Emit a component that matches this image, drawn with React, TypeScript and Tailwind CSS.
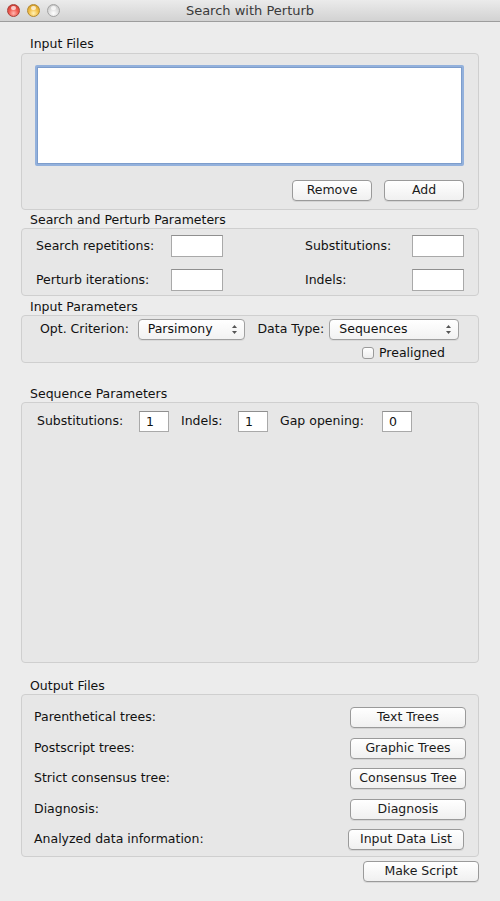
import React from 'react';

const font = "font-['Lucida_Grande','DejaVu_Sans',sans-serif]";

const Btn = ({ label, className = '' }: { label: string; className?: string }) => (
    <button
        className={`h-[21px] rounded-[4px] border border-[#9a9a9a] bg-gradient-to-b from-[#ffffff] to-[#f0f0f0] text-[12.5px] text-[#1a1a1a] shadow-[0_1px_0_rgba(0,0,0,0.08)] ${className}`}
    >
        {label}
    </button>
);

const Field = ({ value = '', className = '' }: { value?: string; className?: string }) => (
    <div
        className={`border border-[#a9a9a9] border-t-[#8f8f8f] bg-white pl-[6px] text-[12.5px] text-[#111] leading-[20px] ${className}`}
    >
        {value}
    </div>
);

const Select = ({ value, className = '' }: { value: string; className?: string }) => (
    <div
        className={`h-[21px] flex items-center justify-between rounded-[4px] border border-[#a0a0a0] bg-gradient-to-b from-[#ffffff] to-[#f2f2f2] pl-[9px] pr-[6px] text-[12.5px] text-[#111] shadow-[0_1px_0_rgba(0,0,0,0.06)] ${className}`}
    >
        <span>{value}</span>
        <svg width="7" height="11" viewBox="0 0 7 11">
            <path d="M3.5 1 L6 4 H1 Z" fill="#555" />
            <path d="M3.5 10 L6 7 H1 Z" fill="#555" />
        </svg>
    </div>
);

const GroupLabel = ({ text, className = '' }: { text: string; className?: string }) => (
    <div className={`pl-[9px] text-[12.5px] leading-[16px] text-[#111] ${className}`}>{text}</div>
);

const Box = ({ children, className = '' }: { children: React.ReactNode; className?: string }) => (
    <div className={`rounded-[4px] border border-[#cfcfcf] bg-[#e7e7e7] ${className}`}>{children}</div>
);

const Light = ({ color }: { color: 'red' | 'yellow' | 'gray' }) => {
    const cls =
        color === 'red'
            ? 'bg-[radial-gradient(circle_at_50%_75%,#ffb8b0_0%,#f05a50_45%,#c0302a_100%)] border-[#a84038]'
            : color === 'yellow'
            ? 'bg-[radial-gradient(circle_at_50%_75%,#fff2b8_0%,#f3c04a_45%,#c9911c_100%)] border-[#b3892e]'
            : 'bg-[radial-gradient(circle_at_50%_75%,#ffffff_0%,#e0e0e0_45%,#bbbbbb_100%)] border-[#a2a2a2]';
    return (
        <div className={`relative h-[13px] w-[13px] rounded-full border ${cls}`}>
            <div className="absolute left-[3px] top-[1px] h-[4px] w-[5px] rounded-full bg-white/70" />
        </div>
    );
};

const outputRows = [
    { label: 'Parenthetical trees:', btn: 'Text Trees', shift: '' },
    { label: 'Postscript trees:', btn: 'Graphic Trees', shift: '' },
    { label: 'Strict consensus tree:', btn: 'Consensus Tree', shift: '' },
    { label: 'Diagnosis:', btn: 'Diagnosis', shift: '' },
    { label: 'Analyzed data information:', btn: 'Input Data List', shift: 'mr-[2px]' },
];

export default function App() {
    return (
        <div className={`w-[500px] h-[901px] bg-[#ececec] flex flex-col ${font}`}>
            {/* Title bar */}
            <div className="relative h-[22px] flex items-center justify-center border-b border-[#9d9d9d] bg-gradient-to-b from-[#ebebeb] to-[#d2d2d2]">
                <div className="absolute left-[7px] top-[4px] flex gap-[7px]">
                    <Light color="red" />
                    <Light color="yellow" />
                    <Light color="gray" />
                </div>
                <span className="text-[13px] text-[#3a3a3a]">Search with Perturb</span>
            </div>

            <div className="flex flex-col px-[21px]">
                {/* Input Files */}
                <GroupLabel text="Input Files" className="mt-[14px] mb-[1px]" />
                <Box className="pl-[13px] pr-[14px] pt-[11px] pb-[8px]">
                    <div className="h-[101px] border-[2px] border-[#93b1dc] rounded-[2px] bg-white shadow-[inset_0_0_0_1px_#7d9dcc]" />
                    <div className="mt-[14px] flex justify-end gap-[12px]">
                        <Btn label="Remove" className="w-[80px]" />
                        <Btn label="Add" className="w-[80px]" />
                    </div>
                </Box>

                {/* Search and Perturb Parameters */}
                <GroupLabel text="Search and Perturb Parameters" className="mt-[2px]" />
                <Box className="pl-[14px] pr-[14px] pt-[6px] pb-[4px] text-[12.5px] text-[#111]">
                    <div className="flex items-center h-[22px]">
                        <span className="w-[135px]">Search repetitions:</span>
                        <Field className="w-[52px] h-[22px]" />
                        <span className="ml-[82px] flex-1">Substitutions:</span>
                        <Field className="w-[52px] h-[22px]" />
                    </div>
                    <div className="mt-[12px] flex items-center h-[22px]">
                        <span className="w-[135px]">Perturb iterations:</span>
                        <Field className="w-[52px] h-[22px]" />
                        <span className="ml-[82px] flex-1">Indels:</span>
                        <Field className="w-[52px] h-[22px]" />
                    </div>
                </Box>

                {/* Input Parameters */}
                <GroupLabel text="Input Parameters" className="mt-[3px]" />
                <Box className="pl-[18px] pr-[19px] pt-[3px] pb-[2px] text-[12.5px] text-[#111]">
                    <div className="flex items-center">
                        <span className="w-[98px]">Opt. Criterion:</span>
                        <Select value="Parsimony" className="w-[108px]" />
                        <span className="ml-[12px] w-[72px]">Data Type:</span>
                        <Select value="Sequences" className="w-[130px]" />
                    </div>
                    <div className="mt-[6px] flex items-center justify-end pr-[14px] h-[14px]">
                        <div className="h-[12px] w-[12px] rounded-[3px] border border-[#9a9a9a] bg-gradient-to-b from-[#ffffff] to-[#ededed]" />
                        <span className="ml-[5px]">Prealigned</span>
                    </div>
                </Box>

                {/* Sequence Parameters */}
                <GroupLabel text="Sequence Parameters" className="mt-[23px]" />
                <Box className="h-[261px] pl-[15px] pt-[8px] text-[12.5px] text-[#111]">
                    <div className="flex items-center">
                        <span className="w-[102px]">Substitutions:</span>
                        <Field value="1" className="w-[30px] h-[21px] pl-[5px]" />
                        <span className="ml-[12px] w-[57px]">Indels:</span>
                        <Field value="1" className="w-[30px] h-[21px] pl-[5px]" />
                        <span className="ml-[12px] w-[102px]">Gap opening:</span>
                        <Field value="0" className="w-[30px] h-[21px] pl-[5px]" />
                    </div>
                </Box>

                {/* Output Files */}
                <GroupLabel text="Output Files" className="mt-[15px]" />
                <Box className="pl-[12px] pr-[12px] pt-[12px] pb-[6px] text-[12.5px] text-[#111]">
                    <div className="flex flex-col gap-[9.5px]">
                        {outputRows.map((row) => (
                            <div key={row.btn} className="flex items-center justify-between">
                                <span>{row.label}</span>
                                <Btn label={row.btn} className={`w-[116px] ${row.shift}`} />
                            </div>
                        ))}
                    </div>
                </Box>

                <div className="mt-[4px] flex justify-end">
                    <Btn label="Make Script" className="w-[116px]" />
                </div>
            </div>
        </div>
    );
}
